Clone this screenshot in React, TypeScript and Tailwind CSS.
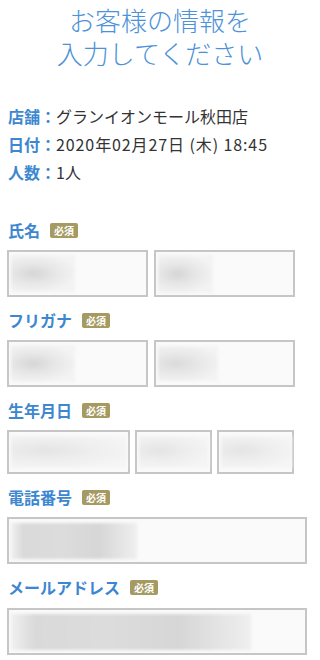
import React from "react";

const font = { fontFamily: '"Noto Sans CJK JP", "Noto Sans", sans-serif' };

type Blob = { w: number; h: number; grad: string };

// blurred placeholder standing in for the entered value
function Field({
  width,
  height,
  blob,
}: {
  width: string;
  height: string;
  blob: Blob;
}) {
  return (
    <div
      className={`${width} ${height} border-2 border-[#c6c6c6] bg-[#fafafa] pl-[2px] flex items-center`}
    >
      <div
        className={`blur-[1.5px] ${blob.grad}`}
        style={{ width: blob.w, height: blob.h }}
      />
    </div>
  );
}

function Label({ text }: { text: string }) {
  return (
    <div className="flex items-center h-6 gap-[10px]">
      <span className="text-[16px] font-bold text-[#3d87d0] leading-6">
        {text}
      </span>
      <span className="bg-[#a59a62] text-white text-[10px] leading-[15px] h-[15px] px-[4px] rounded-[2px] font-bold">
        必須
      </span>
    </div>
  );
}

const g1 =
  "bg-[radial-gradient(ellipse_at_35%_50%,#d5d5d5_0%,#e6e6e6_35%,#f3f3f3_75%)]";
const g2 =
  "bg-[radial-gradient(ellipse_at_30%_50%,#dadada_0%,#e8e8e8_40%,#f3f3f3_80%)]";
const g3 =
  "bg-[radial-gradient(ellipse_at_30%_45%,#e4e4e4_0%,#eeeeee_40%,#f5f5f5_80%)]";
const g4 =
  "bg-[linear-gradient(90deg,#f0f0f0_0%,#d9d9d9_10%,#dcdcdc_40%,#d6d6d6_70%,#efefef_100%)]";

export default function App() {
  return (
    <div className="w-[320px] h-[660px] bg-white overflow-hidden" style={font}>
      <h1 className="pt-[3px] text-center text-[26px] leading-[33px] font-light text-[#4d92d8]">
        <span className="block">お客様の情報を</span>
        <span className="block">入力してください</span>
      </h1>

      <div className="mt-[33px] px-2 text-[16px] leading-7 text-[#333]">
        <p>
          <span className="font-bold text-[#3d87d0]">店舗：</span>
          グランイオンモール秋田店
        </p>
        <p>
          <span className="font-bold text-[#3d87d0]">日付：</span>
          <span className="tracking-[0.9px]">2020年02月27日 (木) 18:45</span>
        </p>
        <p>
          <span className="font-bold text-[#3d87d0]">人数：</span>1人
        </p>
      </div>

      <div className="mt-[32px] px-2">
        <Label text="氏名" />
        <div className="mt-2 -ml-px flex gap-[6px]">
          <Field width="w-[141px]" height="h-[47px]" blob={{ w: 64, h: 37, grad: g1 }} />
          <Field width="w-[141px]" height="h-[47px]" blob={{ w: 55, h: 38, grad: g1 }} />
        </div>

        <div className="mt-[11px]">
          <Label text="フリガナ" />
        </div>
        <div className="mt-2 -ml-px flex gap-[6px]">
          <Field width="w-[141px]" height="h-[47px]" blob={{ w: 64, h: 37, grad: g1 }} />
          <Field width="w-[141px]" height="h-[47px]" blob={{ w: 60, h: 35, grad: g2 }} />
        </div>

        <div className="mt-[11px]">
          <Label text="生年月日" />
        </div>
        <div className="mt-2 -ml-px flex gap-[5px]">
          <Field width="w-[123px]" height="h-[44px]" blob={{ w: 116, h: 32, grad: g3 }} />
          <Field width="w-[77px]" height="h-[44px]" blob={{ w: 70, h: 32, grad: g3 }} />
          <Field width="w-[77px]" height="h-[44px]" blob={{ w: 71, h: 32, grad: g3 }} />
        </div>

        <div className="mt-[11px]">
          <Label text="電話番号" />
        </div>
        <div className="mt-[8px] -ml-px">
          <Field width="w-[300px]" height="h-[47px]" blob={{ w: 126, h: 36, grad: g4 }} />
        </div>

        <div className="mt-[11px]">
          <Label text="メールアドレス" />
        </div>
        <div className="mt-[9px] -ml-px">
          <Field width="w-[300px]" height="h-[47px]" blob={{ w: 240, h: 36, grad: g4 }} />
        </div>
      </div>
    </div>
  );
}
